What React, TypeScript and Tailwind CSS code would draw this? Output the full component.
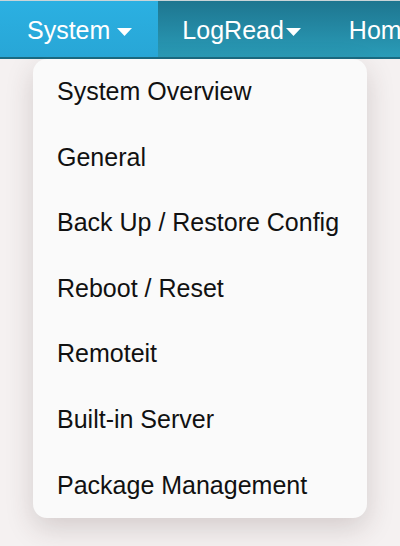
import React from "react"

const items = [
  "System Overview",
  "General",
  "Back Up / Restore Config",
  "Reboot / Reset",
  "Remoteit",
  "Built-in Server",
  "Package Management",
]

function Caret({ gap }: { gap: string }) {
  return (
    <svg width="15" height="8" viewBox="0 0 15 8" className={gap}>
      <path d="M0 0 H15 L7.5 8 Z" fill="#fff" />
    </svg>
  )
}

export default function App() {
  return (
    <div className="h-[546px] w-[400px] overflow-hidden bg-[#f5f1f1] font-['Liberation_Sans',Arial,sans-serif]">
      <nav className="flex h-[59px] border-t border-[#c9d4d8] border-b-2 border-b-[#1a6b82] bg-gradient-to-b from-[#1e7690] to-[#2a9cb8] pt-[3px] text-[25px] text-white">
        <div className="-mt-[3px] flex items-center bg-gradient-to-b from-[#2bb0e2] to-[#28a6d6] pl-[27px] pr-[26px] pt-[3px]">
          System
          <Caret gap="ml-[7px] mt-[2px]" />
        </div>
        <div className="flex items-center pl-[24px] pr-[24px]">
          LogRead
          <Caret gap="ml-[2px] mt-[2px]" />
        </div>
        <div className="flex items-center pl-[24px]">Home</div>
      </nav>
      <div className="ml-[33px] w-[334px] rounded-[14px] bg-[#fafafa] shadow-[0_10px_28px_rgba(60,40,40,0.18)]">
        {items.map((item) => (
          <div key={item} className="flex h-[65.6px] items-center px-[24px] text-[25px] text-[#111]">
            {item}
          </div>
        ))}
      </div>
    </div>
  )
}
